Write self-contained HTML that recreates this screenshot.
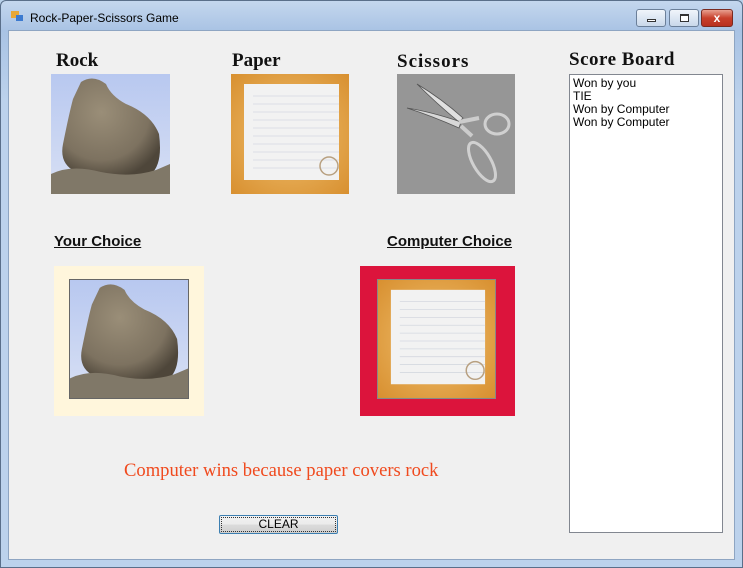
<!DOCTYPE html>
<html><head><meta charset="utf-8"><style>
*{margin:0;padding:0;box-sizing:border-box}
body{width:743px;height:568px;overflow:hidden;background:#b9d1ea;font-family:"Liberation Sans",sans-serif;position:relative}
.frame{position:absolute;left:0;top:0;width:743px;height:568px;background:linear-gradient(#c4d7ee,#a9c3e4 30px,#bcd2ec 100px,#bcd2ec);border:1px solid #5a6f8a;border-radius:6px 6px 0 0}
.client{position:absolute;left:8px;top:30px;width:727px;height:530px;background:#f0f0f0;border:1px solid #8ea5c2}
.abs{position:absolute}
.title{left:30px;top:11px;font-size:12px;color:#000}
.gothic{font-family:"Liberation Serif",serif;font-weight:bold;font-size:19px;color:#111}
.btn{top:9px;height:18px;border:1px solid #6b7f99;border-radius:3px;background:linear-gradient(#f0f5fb,#c9d8ea)}
.lbl{font-weight:bold;font-size:15px;text-decoration:underline;color:#111}
</style></head><body>
<div class="frame"></div>
<div class="abs" style="left:11px;top:11px;width:8px;height:7px;background:#e8a838"></div>
<div class="abs" style="left:16px;top:15px;width:7px;height:6px;background:#3c7ad0"></div>
<div class="abs title">Rock-Paper-Scissors Game</div>
<div class="abs btn" style="left:636px;width:30px"><div class="abs" style="left:10px;top:9px;width:9px;height:3px;border:1px solid #333;background:#fff"></div></div>
<div class="abs btn" style="left:669px;width:30px"><div class="abs" style="left:10px;top:4px;width:9px;height:8px;border:1px solid #333;border-top-width:2px;background:#fff"></div></div>
<div class="abs btn" style="left:701px;width:32px;background:linear-gradient(#e8a090,#c8402c 50%,#b83020);border-color:#7a2a20;color:#fff;font-weight:bold;font-size:12px;text-align:center;line-height:16px">x</div>
<div class="client"></div>

<div class="abs gothic" style="left:56px;top:50px">Rock</div>
<div class="abs gothic" style="left:232px;top:50px">Paper</div>
<div class="abs gothic" style="left:397px;top:51px;letter-spacing:1px">Scissors</div>
<div class="abs gothic" style="left:569px;top:49px;letter-spacing:0.5px">Score Board</div>

<svg class="abs" style="left:51px;top:74px" width="119" height="120" viewBox="0 0 119 120">
<defs><linearGradient id="sky" x1="0" y1="0" x2="0" y2="1"><stop offset="0" stop-color="#b8c8f0"/><stop offset="1" stop-color="#d8e0f4"/></linearGradient>
<radialGradient id="st" cx="0.4" cy="0.35" r="0.7"><stop offset="0" stop-color="#9a8e78"/><stop offset="0.7" stop-color="#7d7260"/><stop offset="1" stop-color="#4e463a"/></radialGradient></defs>
<rect width="119" height="120" fill="url(#sky)"/>
<path d="M30 8 Q42 0 55 10 Q60 22 75 30 Q100 40 108 60 Q112 90 100 100 Q60 104 25 98 Q8 90 12 70 Q18 40 22 25 Z" fill="url(#st)"/>
<path d="M0 100 Q20 90 50 98 Q80 104 105 96 L119 90 L119 120 L0 120 Z" fill="#807868"/>
</svg>
<svg class="abs" style="left:231px;top:74px" width="118" height="120" viewBox="0 0 118 120">
<defs><radialGradient id="or" cx="0.5" cy="0.5" r="0.7"><stop offset="0" stop-color="#f0c070"/><stop offset="1" stop-color="#d89030"/></radialGradient></defs>
<rect width="118" height="120" fill="url(#or)"/>
<rect x="13" y="10" width="95" height="96" fill="#f2f2f2"/>
<g stroke="#d4d8e0" stroke-width="0.8"><line x1="22" y1="22" x2="108" y2="22"/><line x1="22" y1="30" x2="108" y2="30"/><line x1="22" y1="38" x2="108" y2="38"/><line x1="22" y1="46" x2="108" y2="46"/><line x1="22" y1="54" x2="108" y2="54"/><line x1="22" y1="62" x2="108" y2="62"/><line x1="22" y1="70" x2="108" y2="70"/><line x1="22" y1="78" x2="108" y2="78"/><line x1="22" y1="86" x2="108" y2="86"/><line x1="22" y1="94" x2="108" y2="94"/></g>
<circle cx="98" cy="92" r="9" fill="none" stroke="#b8a080" stroke-width="1.5"/>
</svg>
<svg class="abs" style="left:397px;top:74px" width="118" height="120" viewBox="0 0 118 120">
<rect width="118" height="120" fill="#969696"/>
<path d="M20 10 Q40 30 62 48 L66 44 Q45 25 20 10 Z" fill="#e0e0e0" stroke="#555" stroke-width="0.8"/>
<path d="M10 34 Q35 42 62 54 L64 48 Q35 38 10 34 Z" fill="#d8d8d8" stroke="#555" stroke-width="0.8"/>
<path d="M62 48 L82 44" stroke="#ccc" stroke-width="4"/>
<ellipse cx="100" cy="50" rx="12" ry="10" fill="none" stroke="#d0d0d0" stroke-width="3"/>
<path d="M64 52 L75 62" stroke="#ccc" stroke-width="4"/>
<ellipse cx="85" cy="88" rx="9" ry="22" transform="rotate(-30 85 88)" fill="none" stroke="#d0d0d0" stroke-width="3"/>
</svg>

<div class="abs lbl" style="left:54px;top:233px">Your Choice</div>
<div class="abs lbl" style="left:387px;top:233px">Computer Choice</div>

<div class="abs" style="left:54px;top:266px;width:150px;height:150px;background:#fff6dc"></div>
<svg class="abs" style="left:69px;top:279px;border:1px solid #666" width="120" height="120" viewBox="0 0 119 120" preserveAspectRatio="none">
<rect width="119" height="120" fill="url(#sky)"/>
<path d="M30 8 Q42 0 55 10 Q60 22 75 30 Q100 40 108 60 Q112 90 100 100 Q60 104 25 98 Q8 90 12 70 Q18 40 22 25 Z" fill="url(#st)"/>
<path d="M0 100 Q20 90 50 98 Q80 104 105 96 L119 90 L119 120 L0 120 Z" fill="#807868"/>
</svg>

<div class="abs" style="left:360px;top:266px;width:155px;height:150px;background:#dc143c"></div>
<svg class="abs" style="left:377px;top:279px;border:1px solid #888" width="119" height="120" viewBox="0 0 118 120" preserveAspectRatio="none">
<rect width="118" height="120" fill="url(#or)"/>
<rect x="13" y="10" width="95" height="96" fill="#f2f2f2"/>
<g stroke="#d4d8e0" stroke-width="0.8"><line x1="22" y1="22" x2="108" y2="22"/><line x1="22" y1="30" x2="108" y2="30"/><line x1="22" y1="38" x2="108" y2="38"/><line x1="22" y1="46" x2="108" y2="46"/><line x1="22" y1="54" x2="108" y2="54"/><line x1="22" y1="62" x2="108" y2="62"/><line x1="22" y1="70" x2="108" y2="70"/><line x1="22" y1="78" x2="108" y2="78"/><line x1="22" y1="86" x2="108" y2="86"/><line x1="22" y1="94" x2="108" y2="94"/></g>
<circle cx="98" cy="92" r="9" fill="none" stroke="#b8a080" stroke-width="1.5"/>
</svg>

<div class="abs" style="left:569px;top:74px;width:154px;height:459px;background:#fff;border:1px solid #828790;font-size:12px;line-height:13px;padding:2px 3px;color:#000">Won by you<br>TIE<br>Won by Computer<br>Won by Computer</div>

<div class="abs" style="left:124px;top:460px;font-family:'Liberation Serif',serif;font-size:18.6px;color:#f04a1e;white-space:nowrap">Computer wins because paper covers rock</div>

<div class="abs" style="left:219px;top:515px;width:119px;height:19px;border:1px solid #3c7fb1;border-radius:2px;background:linear-gradient(#f2f2f2,#ebebeb 50%,#dcdcdc 51%,#cfcfcf);font-size:12px;text-align:center;line-height:17px;color:#000"><div style="position:absolute;left:1px;top:1px;right:1px;bottom:1px;border:1px dotted #333"></div>CLEAR</div>
</body></html>
